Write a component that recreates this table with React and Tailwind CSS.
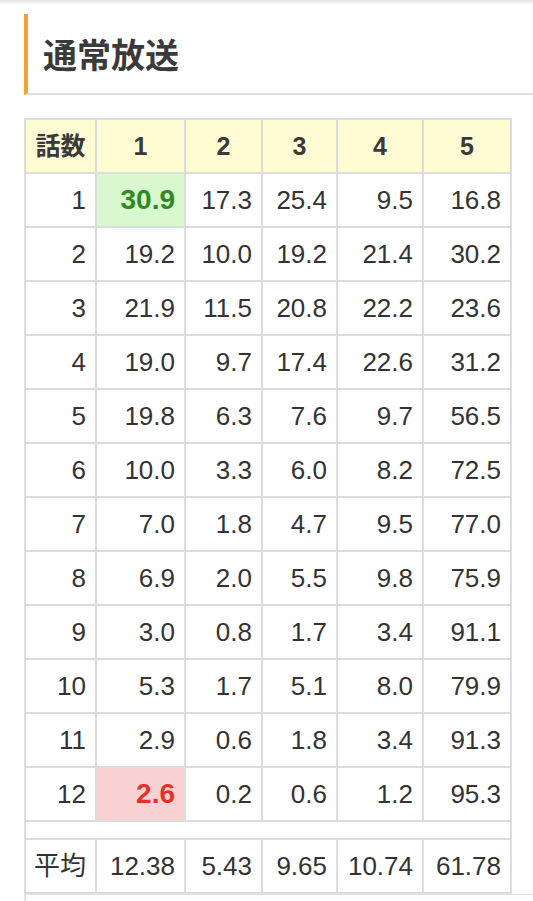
import React from "react";

const rows = [
  ["1", "30.9", "17.3", "25.4", "9.5", "16.8"],
  ["2", "19.2", "10.0", "19.2", "21.4", "30.2"],
  ["3", "21.9", "11.5", "20.8", "22.2", "23.6"],
  ["4", "19.0", "9.7", "17.4", "22.6", "31.2"],
  ["5", "19.8", "6.3", "7.6", "9.7", "56.5"],
  ["6", "10.0", "3.3", "6.0", "8.2", "72.5"],
  ["7", "7.0", "1.8", "4.7", "9.5", "77.0"],
  ["8", "6.9", "2.0", "5.5", "9.8", "75.9"],
  ["9", "3.0", "0.8", "1.7", "3.4", "91.1"],
  ["10", "5.3", "1.7", "5.1", "8.0", "79.9"],
  ["11", "2.9", "0.6", "1.8", "3.4", "91.3"],
  ["12", "2.6", "0.2", "0.6", "1.2", "95.3"],
];

const avg = ["平均", "12.38", "5.43", "9.65", "10.74", "61.78"];
const widths = ["w-[71px]", "w-[89px]", "w-[77px]", "w-[75px]", "w-[86px]", "w-[88px]"];

const font = "font-['Liberation_Sans','Noto_Sans_CJK_JP',sans-serif]";
const cell = "border-2 border-[#dcdcdc] pl-[6px] pr-[9px] py-[8px] leading-[36px] text-[26px] text-right text-[#333] whitespace-nowrap";

export default function App() {
  return (
    <div className={`min-h-[901px] bg-white ${font}`}>
      <div className="h-[14px] bg-[linear-gradient(to_bottom,#e4e4e4,#ffffff_5px)]" />
      <div className="pl-[24px]">
        <h2 className="border-l-4 border-b-2 border-l-[#f0a23a] border-b-[#dddddd] pl-[15px] py-[14px] text-[34px] leading-[51px] font-bold text-[#3a3a3a] font-['Noto_Sans_CJK_JP',sans-serif]">
          通常放送
        </h2>
        <div className="mt-[23px]">
          <table className="border-collapse table-fixed">
            <thead>
              <tr className="bg-[#fffbd2]">
                {["話数", "1", "2", "3", "4", "5"].map((h, i) => (
                  <th
                    key={i}
                    className={`${widths[i]} border-2 border-[#dcdcdc] px-[6px] py-[8px] leading-[36px] text-[25px] font-bold text-center text-[#3a3a3a]`}
                  >
                    {h}
                  </th>
                ))}
              </tr>
            </thead>
            <tbody>
              {rows.map((r, ri) => (
                <tr key={ri}>
                  {r.map((v, ci) => {
                    let extra = "";
                    if (ri === 0 && ci === 1) extra = " bg-[#d8f8cf] !text-[#2f8a24] font-bold !text-[28px]";
                    if (ri === 11 && ci === 1) extra = " bg-[#f8d2d2] !text-[#e2322b] font-bold !text-[28px]";
                    return (
                      <td key={ci} className={cell + extra}>
                        {v}
                      </td>
                    );
                  })}
                </tr>
              ))}
              <tr>
                <td colSpan={6} className="border-2 border-[#dcdcdc] px-[10px] py-[8px] h-[18px]"></td>
              </tr>
              <tr>
                {avg.map((v, ci) => (
                  <td key={ci} className={cell}>
                    {v}
                  </td>
                ))}
              </tr>
            </tbody>
          </table>
          <div className="h-[20px] border-l-2 border-t border-[#e2e2e2]" />
        </div>
      </div>
    </div>
  );
}
